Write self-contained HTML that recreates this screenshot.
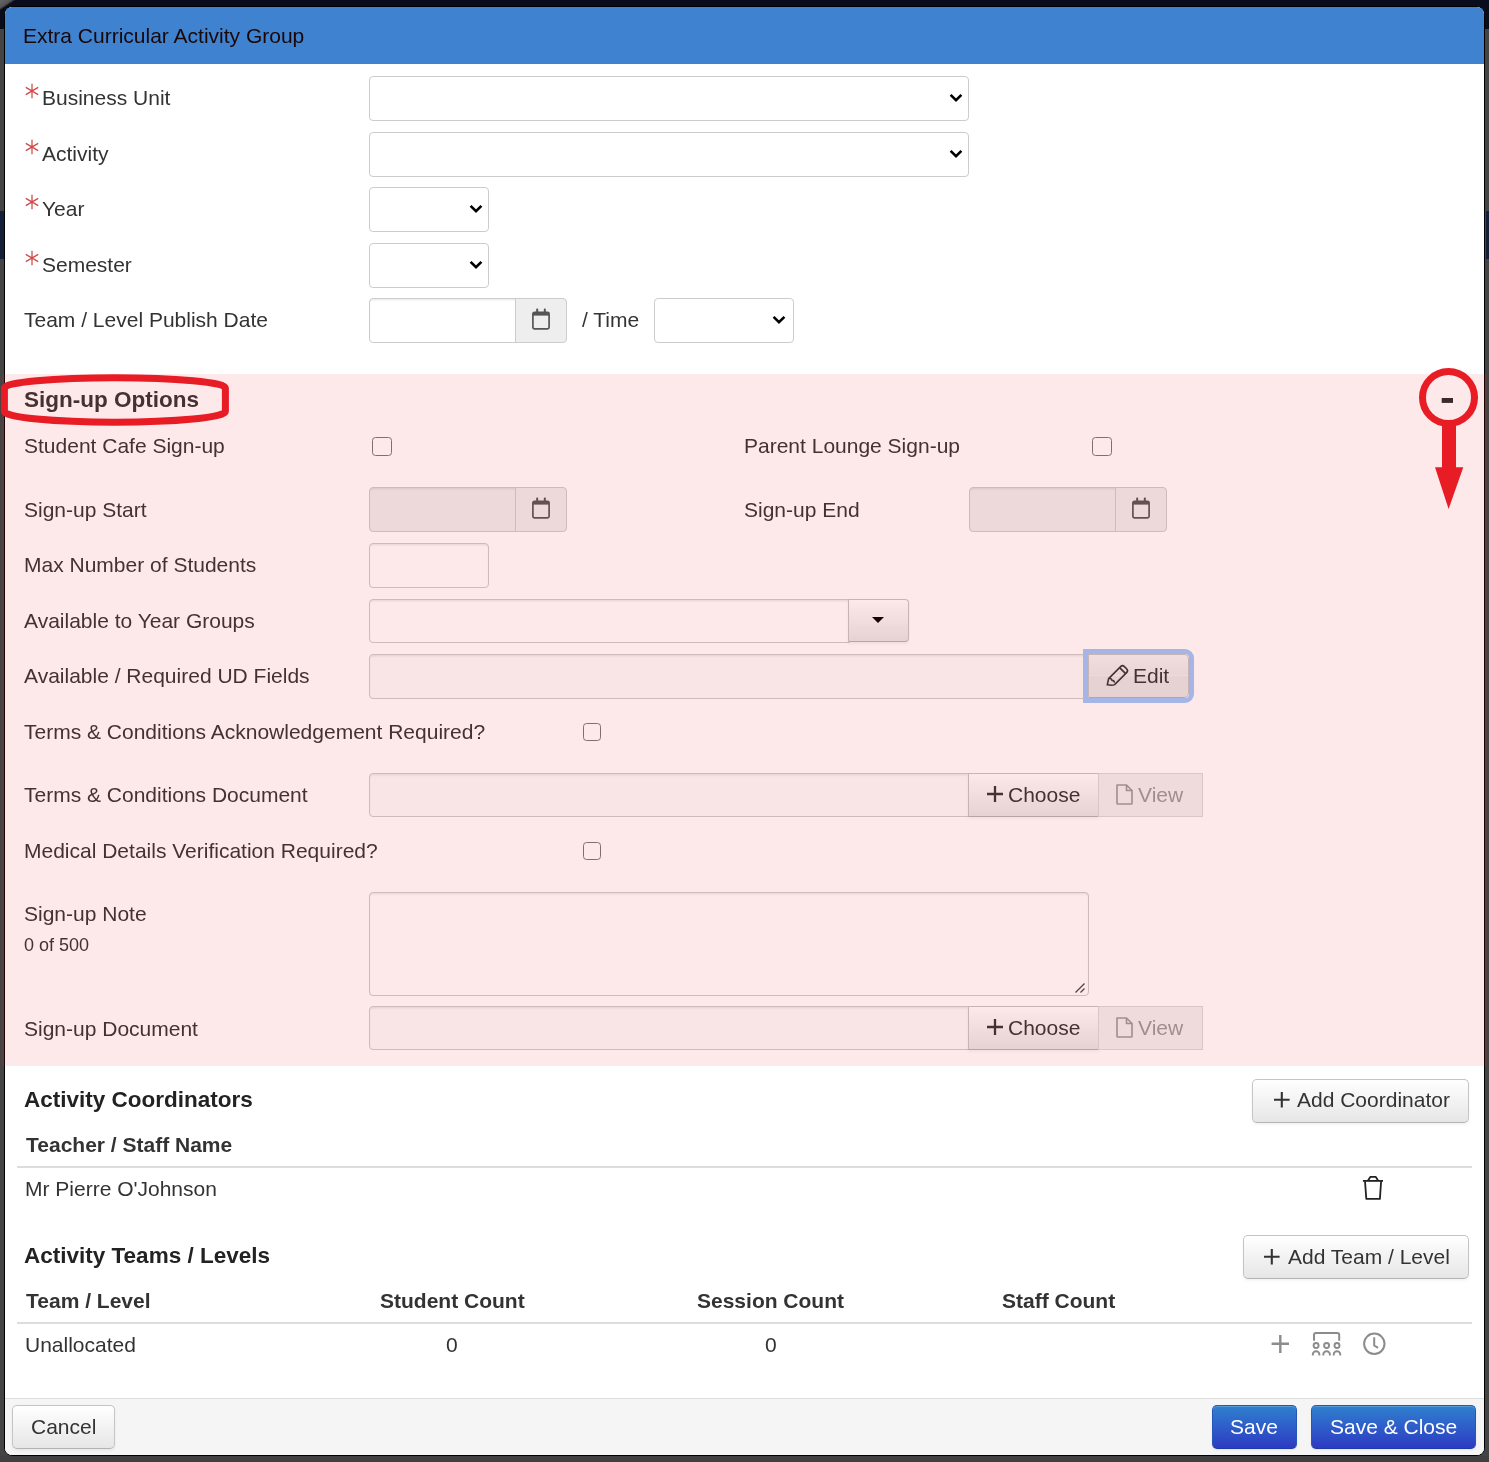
<!DOCTYPE html>
<html><head><meta charset="utf-8"><style>
html,body{margin:0;padding:0;}
body{width:1489px;height:1462px;position:relative;overflow:hidden;background:#444444;font-family:"Liberation Sans",sans-serif;}
.t{position:absolute;line-height:1;white-space:pre;will-change:transform;font-family:"Liberation Sans",sans-serif;}
.b{position:absolute;box-sizing:border-box;}
svg.b{overflow:visible;}
</style></head><body>
<div class="b" style="left:0px;top:0px;width:1489px;height:29px;background:#090c1d;"></div>
<div class="b" style="left:0px;top:1456px;width:1489px;height:6px;background:#404040;"></div>
<div class="b" style="left:0px;top:0px;width:16px;height:10px;background:linear-gradient(146deg,#666 0%,#555 38%,rgba(10,13,30,0) 52%);"></div>
<div class="b" style="left:1486px;top:211px;width:3px;height:48px;background:#14203a;"></div>
<div class="b" style="left:0px;top:211px;width:4px;height:48px;background:#14203a;"></div>
<div class="b" style="left:4px;top:6px;width:1481px;height:1450px;background:#fff;border:1px solid #000;border-radius:8px;overflow:hidden;"></div>
<div class="b" style="left:5px;top:7px;width:1479px;height:56.5px;background:#3f82d0;border-radius:7px 7px 0 0;"></div>
<div class="t" style="left:22.5px;top:25.00px;font-size:21px;font-weight:400;color:#1a0808;">Extra Curricular Activity Group</div>
<div class="b" style="left:5px;top:1398px;width:1479px;height:57px;background:#f5f5f5;border-top:1.5px solid #dddddd;border-radius:0 0 7px 7px;"></div>
<svg class="b" style="left:23.5px;top:83.4px" width="16" height="16" viewBox="-8 -8 16 16"><path d="M0 -7.25 V7.25 M-6.2 -3.6 L6.2 3.6 M-6.2 3.6 L6.2 -3.6" stroke="#d04848" stroke-width="1.25"/></svg>
<div class="t" style="left:42px;top:87.00px;font-size:21px;font-weight:400;color:#333;">Business Unit</div>
<div class="b" style="left:369px;top:76px;width:600px;height:45px;background:#fff;border:1.5px solid #cccccc;border-radius:4px;"></div>
<svg class="b" style="left:949px;top:93.0px" width="14" height="10" viewBox="0 0 14 10"><path d="M1.6 1.8 L7 7.2 L12.4 1.8" fill="none" stroke="#000" stroke-width="2.6"/></svg>
<svg class="b" style="left:23.5px;top:138.9px" width="16" height="16" viewBox="-8 -8 16 16"><path d="M0 -7.25 V7.25 M-6.2 -3.6 L6.2 3.6 M-6.2 3.6 L6.2 -3.6" stroke="#d04848" stroke-width="1.25"/></svg>
<div class="t" style="left:42px;top:143.00px;font-size:21px;font-weight:400;color:#333;">Activity</div>
<div class="b" style="left:369px;top:131.5px;width:600px;height:45.0px;background:#fff;border:1.5px solid #cccccc;border-radius:4px;"></div>
<svg class="b" style="left:949px;top:148.5px" width="14" height="10" viewBox="0 0 14 10"><path d="M1.6 1.8 L7 7.2 L12.4 1.8" fill="none" stroke="#000" stroke-width="2.6"/></svg>
<svg class="b" style="left:23.5px;top:194.4px" width="16" height="16" viewBox="-8 -8 16 16"><path d="M0 -7.25 V7.25 M-6.2 -3.6 L6.2 3.6 M-6.2 3.6 L6.2 -3.6" stroke="#d04848" stroke-width="1.25"/></svg>
<div class="t" style="left:42px;top:198.00px;font-size:21px;font-weight:400;color:#333;">Year</div>
<div class="b" style="left:369px;top:187px;width:120px;height:45px;background:#fff;border:1.5px solid #cccccc;border-radius:4px;"></div>
<svg class="b" style="left:469px;top:204.0px" width="14" height="10" viewBox="0 0 14 10"><path d="M1.6 1.8 L7 7.2 L12.4 1.8" fill="none" stroke="#000" stroke-width="2.6"/></svg>
<svg class="b" style="left:23.5px;top:249.89999999999998px" width="16" height="16" viewBox="-8 -8 16 16"><path d="M0 -7.25 V7.25 M-6.2 -3.6 L6.2 3.6 M-6.2 3.6 L6.2 -3.6" stroke="#d04848" stroke-width="1.25"/></svg>
<div class="t" style="left:42px;top:254.00px;font-size:21px;font-weight:400;color:#333;">Semester</div>
<div class="b" style="left:369px;top:242.5px;width:120px;height:45.0px;background:#fff;border:1.5px solid #cccccc;border-radius:4px;"></div>
<svg class="b" style="left:469px;top:259.5px" width="14" height="10" viewBox="0 0 14 10"><path d="M1.6 1.8 L7 7.2 L12.4 1.8" fill="none" stroke="#000" stroke-width="2.6"/></svg>
<div class="t" style="left:24px;top:309.00px;font-size:21px;font-weight:400;color:#333;">Team / Level Publish Date</div>
<div class="b" style="left:369px;top:298px;width:147.5px;height:45px;background:#fff;border:1.5px solid #cccccc;border-radius:4px 0 0 4px;box-shadow:inset 0 1.5px 1.5px rgba(0,0,0,.075);"></div>
<div class="b" style="left:515px;top:298px;width:52px;height:45px;background:#eeeeee;border:1.5px solid #cccccc;border-radius:0 4px 4px 0;"></div>
<svg class="b" style="left:532.0px;top:308.2px" width="18" height="22" viewBox="0 0 18 22"><rect x="0.9" y="4.4" width="16.2" height="16.4" rx="1.6" fill="none" stroke="#555" stroke-width="1.7"/><rect x="0.9" y="4.4" width="16.2" height="3.2" fill="#555"/><rect x="4.2" y="0.6" width="2" height="4.4" rx="0.8" fill="#555"/><rect x="11.8" y="0.6" width="2" height="4.4" rx="0.8" fill="#555"/></svg>
<div class="t" style="left:582px;top:309.00px;font-size:21px;font-weight:400;color:#333;">/ Time</div>
<div class="b" style="left:654px;top:298px;width:140px;height:45px;background:#fff;border:1.5px solid #cccccc;border-radius:4px;"></div>
<svg class="b" style="left:771.5px;top:315px" width="14" height="10" viewBox="0 0 14 10"><path d="M1.6 1.8 L7 7.2 L12.4 1.8" fill="none" stroke="#000" stroke-width="2.6"/></svg>
<div class="t" style="left:24px;top:389.00px;font-size:22.5px;font-weight:700;color:#333;">Sign-up Options</div>
<div class="t" style="left:24px;top:435.00px;font-size:21px;font-weight:400;color:#333;">Student Cafe Sign-up</div>
<div class="b" style="left:372.3px;top:437px;width:19.30000000000001px;height:19.30000000000001px;background:#fff;border:1.8px solid #767676;border-radius:3.5px;"></div>
<div class="t" style="left:744px;top:435.00px;font-size:21px;font-weight:400;color:#333;">Parent Lounge Sign-up</div>
<div class="b" style="left:1092.3px;top:437px;width:19.299999999999955px;height:19.30000000000001px;background:#fff;border:1.8px solid #767676;border-radius:3.5px;"></div>
<div class="t" style="left:24px;top:499.00px;font-size:21px;font-weight:400;color:#333;">Sign-up Start</div>
<div class="b" style="left:369px;top:487px;width:147.5px;height:44.5px;background:#eeeeee;border:1.5px solid #cccccc;border-radius:4px 0 0 4px;box-shadow:inset 0 1.5px 1.5px rgba(0,0,0,.075);"></div>
<div class="b" style="left:515px;top:487px;width:52px;height:44.5px;background:#eeeeee;border:1.5px solid #cccccc;border-radius:0 4px 4px 0;"></div>
<svg class="b" style="left:532.0px;top:496.95px" width="18" height="22" viewBox="0 0 18 22"><rect x="0.9" y="4.4" width="16.2" height="16.4" rx="1.6" fill="none" stroke="#555" stroke-width="1.7"/><rect x="0.9" y="4.4" width="16.2" height="3.2" fill="#555"/><rect x="4.2" y="0.6" width="2" height="4.4" rx="0.8" fill="#555"/><rect x="11.8" y="0.6" width="2" height="4.4" rx="0.8" fill="#555"/></svg>
<div class="t" style="left:744px;top:499.00px;font-size:21px;font-weight:400;color:#333;">Sign-up End</div>
<div class="b" style="left:969px;top:487px;width:147.5px;height:44.5px;background:#eeeeee;border:1.5px solid #cccccc;border-radius:4px 0 0 4px;box-shadow:inset 0 1.5px 1.5px rgba(0,0,0,.075);"></div>
<div class="b" style="left:1115px;top:487px;width:52px;height:44.5px;background:#eeeeee;border:1.5px solid #cccccc;border-radius:0 4px 4px 0;"></div>
<svg class="b" style="left:1132.0px;top:496.95px" width="18" height="22" viewBox="0 0 18 22"><rect x="0.9" y="4.4" width="16.2" height="16.4" rx="1.6" fill="none" stroke="#555" stroke-width="1.7"/><rect x="0.9" y="4.4" width="16.2" height="3.2" fill="#555"/><rect x="4.2" y="0.6" width="2" height="4.4" rx="0.8" fill="#555"/><rect x="11.8" y="0.6" width="2" height="4.4" rx="0.8" fill="#555"/></svg>
<div class="t" style="left:24px;top:554.00px;font-size:21px;font-weight:400;color:#333;">Max Number of Students</div>
<div class="b" style="left:369px;top:543px;width:120px;height:45px;background:#fff;border:1.5px solid #cccccc;border-radius:4px;box-shadow:inset 0 1.5px 1.5px rgba(0,0,0,.075);"></div>
<div class="t" style="left:24px;top:610.00px;font-size:21px;font-weight:400;color:#333;">Available to Year Groups</div>
<div class="b" style="left:369px;top:598.5px;width:480.5px;height:44.0px;background:#fff;border:1.5px solid #cccccc;border-radius:4px 0 0 4px;box-shadow:inset 0 1.5px 1.5px rgba(0,0,0,.075);"></div>
<div class="b" style="left:848px;top:598.5px;width:61px;height:43.5px;background:linear-gradient(#ffffff,#e6e6e6);border:1.5px solid #c5c5c5;border-bottom-color:#b3b3b3;box-shadow:inset 0 1px 0 rgba(255,255,255,.2),0 1.5px 3px rgba(0,0,0,.05);border-radius:0 4px 4px 0;"></div>
<svg class="b" style="left:872px;top:617px" width="12" height="6" viewBox="0 0 12 6"><path d="M0 0 H12 L6 6 Z" fill="#000"/></svg>
<div class="t" style="left:24px;top:665.00px;font-size:21px;font-weight:400;color:#333;">Available / Required UD Fields</div>
<div class="b" style="left:369px;top:654px;width:721px;height:44.5px;background:#fbfbfb;border:1.5px solid #cccccc;border-radius:4px 0 0 4px;box-shadow:inset 0 1.5px 1.5px rgba(0,0,0,.075);"></div>
<div class="b" style="left:1088px;top:654px;width:101px;height:44px;background:linear-gradient(#f3f3f3 0px,#e9e9e9 19.5px,#f0f0f0 20px,#f0f0f0 21px,#e6e6e6 21.5px);border:1.5px solid #c5c5c5;border-bottom-color:#b3b3b3;border-radius:0 5px 5px 0;"></div>
<svg class="b" style="left:1100px;top:658px" width="35" height="35" viewBox="0 0 35 35"><g fill="none" stroke="#333" stroke-width="1.6" stroke-linejoin="round"><path d="M7.3 26.8 L8.6 20.6 L20.6 8.6 Q22.5 6.7 24.4 8.6 L26.6 10.8 Q28.5 12.7 26.6 14.6 L14.6 26.6 Q12.5 27.8 7.3 26.8 Z"/><path d="M19.6 9.6 L25.6 15.6"/><path d="M8.6 20.6 Q10.6 19.6 11.2 21.2 Q11.6 22.2 12.6 22.4 Q14.2 22.8 14.6 24.6"/></g></svg>
<div class="t" style="left:1133px;top:665.00px;font-size:21px;font-weight:400;color:#333;">Edit</div>
<div class="t" style="left:24px;top:721.00px;font-size:21px;font-weight:400;color:#333;">Terms &amp; Conditions Acknowledgement Required?</div>
<div class="b" style="left:583px;top:723px;width:18px;height:18px;background:#fff;border:1.5px solid #767676;border-radius:3.5px;"></div>
<div class="t" style="left:24px;top:784.00px;font-size:21px;font-weight:400;color:#333;">Terms &amp; Conditions Document</div>
<div class="b" style="left:369px;top:773px;width:601px;height:44px;background:#fbfbfb;border:1.5px solid #cccccc;border-radius:4px 0 0 4px;box-shadow:inset 0 1.5px 1.5px rgba(0,0,0,.075);"></div>
<div class="b" style="left:968px;top:773px;width:130.5px;height:44px;background:linear-gradient(#ffffff,#e6e6e6);border:1.5px solid #c5c5c5;border-bottom-color:#b3b3b3;box-shadow:inset 0 1px 0 rgba(255,255,255,.2),0 1.5px 3px rgba(0,0,0,.05);border-radius:0;"></div>
<div class="b" style="left:1097.5px;top:773px;width:105.5px;height:44px;background:#f0f0f0;border:1.5px solid #d9d9d9;border-radius:0;"></div>
<svg class="b" style="left:986.5px;top:786.0px" width="16" height="16" viewBox="0 0 16 16"><path d="M8.0 0 V16 M0 8.0 H16" stroke="#333" stroke-width="2.3"/></svg>
<div class="t" style="left:1008px;top:784.00px;font-size:21px;font-weight:400;color:#333;">Choose</div>
<svg class="b" style="left:1116px;top:783.5px" width="17" height="21" viewBox="0 0 17 21"><path d="M1 1 H10.5 L16 6.5 V19.2 Q16 20 15.2 20 H1.8 Q1 20 1 19.2 Z M10.5 1 V6.5 H16" fill="none" stroke="#999" stroke-width="1.6" stroke-linejoin="round"/></svg>
<div class="t" style="left:1138px;top:784.00px;font-size:21px;font-weight:400;color:#999;">View</div>
<div class="t" style="left:24px;top:840.00px;font-size:21px;font-weight:400;color:#333;">Medical Details Verification Required?</div>
<div class="b" style="left:583px;top:842px;width:18px;height:18px;background:#fff;border:1.5px solid #767676;border-radius:3.5px;"></div>
<div class="t" style="left:24px;top:903.00px;font-size:21px;font-weight:400;color:#333;">Sign-up Note</div>
<div class="t" style="left:24px;top:936.00px;font-size:18px;font-weight:400;color:#333;">0 of 500</div>
<div class="b" style="left:369px;top:892px;width:720px;height:104px;background:#fff;border:1.5px solid #cccccc;border-radius:4px;box-shadow:inset 0 1.5px 1.5px rgba(0,0,0,.075);"></div>
<svg class="b" style="left:1074px;top:982px" width="12" height="12" viewBox="0 0 12 12"><path d="M1.5 10.5 L10.5 1.5 M6.5 10.5 L10.5 6.5" stroke="#444" stroke-width="1.3"/></svg>
<div class="t" style="left:24px;top:1018.00px;font-size:21px;font-weight:400;color:#333;">Sign-up Document</div>
<div class="b" style="left:369px;top:1006px;width:601px;height:43.5px;background:#fbfbfb;border:1.5px solid #cccccc;border-radius:4px 0 0 4px;box-shadow:inset 0 1.5px 1.5px rgba(0,0,0,.075);"></div>
<div class="b" style="left:968px;top:1006px;width:130.5px;height:43.5px;background:linear-gradient(#ffffff,#e6e6e6);border:1.5px solid #c5c5c5;border-bottom-color:#b3b3b3;box-shadow:inset 0 1px 0 rgba(255,255,255,.2),0 1.5px 3px rgba(0,0,0,.05);border-radius:0;"></div>
<div class="b" style="left:1097.5px;top:1006px;width:105.5px;height:43.5px;background:#f0f0f0;border:1.5px solid #d9d9d9;border-radius:0;"></div>
<svg class="b" style="left:986.5px;top:1019.0px" width="16" height="16" viewBox="0 0 16 16"><path d="M8.0 0 V16 M0 8.0 H16" stroke="#333" stroke-width="2.3"/></svg>
<div class="t" style="left:1008px;top:1017.00px;font-size:21px;font-weight:400;color:#333;">Choose</div>
<svg class="b" style="left:1116px;top:1016.5px" width="17" height="21" viewBox="0 0 17 21"><path d="M1 1 H10.5 L16 6.5 V19.2 Q16 20 15.2 20 H1.8 Q1 20 1 19.2 Z M10.5 1 V6.5 H16" fill="none" stroke="#999" stroke-width="1.6" stroke-linejoin="round"/></svg>
<div class="t" style="left:1138px;top:1017.00px;font-size:21px;font-weight:400;color:#999;">View</div>
<div class="b" style="left:2.2px;top:374px;width:1484.8px;height:692px;background:rgba(235,25,45,0.1);"></div>
<div class="b" style="left:1083px;top:649px;width:111px;height:54px;border:5px solid #a5b5e6;border-left-width:5px;border-radius:0 9px 9px 0;"></div>
<svg class="b" style="left:0px;top:360px" width="240" height="80" viewBox="0 360 240 80"><path d="M4.4 388 A110.5 10.3 0 0 1 225.4 388 L225.4 411.5 A110.5 10.7 0 0 1 4.4 411.5 Z" fill="none" stroke="#e81c24" stroke-width="7" stroke-linejoin="round"/></svg>
<svg class="b" style="left:1400px;top:360px" width="89" height="160" viewBox="1400 360 89 160"><circle cx="1448.5" cy="397.5" r="26" fill="none" stroke="#e81c24" stroke-width="7"/><rect x="1442" y="425" width="14" height="43" fill="#e81c24"/><path d="M1435 467.2 H1463.3 L1448.6 509 Z" fill="#e81c24"/><rect x="1441.7" y="398" width="11.3" height="4.9" fill="#3a2a2a"/></svg>
<div class="t" style="left:24px;top:1089.00px;font-size:22.5px;font-weight:700;color:#222;">Activity Coordinators</div>
<div class="b" style="left:1252px;top:1079px;width:217px;height:43.5px;background:linear-gradient(#ffffff,#e6e6e6);border:1.5px solid #c5c5c5;border-bottom-color:#b3b3b3;box-shadow:inset 0 1px 0 rgba(255,255,255,.2),0 1.5px 3px rgba(0,0,0,.05);border-radius:5px;"></div>
<svg class="b" style="left:1273.5px;top:1092px" width="15.6" height="15.6" viewBox="0 0 15.6 15.6"><path d="M7.8 0 V15.6 M0 7.8 H15.6" stroke="#333" stroke-width="2.1"/></svg>
<div class="t" style="left:1297px;top:1089.00px;font-size:21px;font-weight:400;color:#333;">Add Coordinator</div>
<div class="t" style="left:26px;top:1134.00px;font-size:21px;font-weight:700;color:#333;">Teacher / Staff Name</div>
<div class="b" style="left:17px;top:1166px;width:1455px;height:1.5px;background:#dddddd;"></div>
<div class="t" style="left:25px;top:1178.00px;font-size:21px;font-weight:400;color:#333;">Mr Pierre O'Johnson</div>
<svg class="b" style="left:1355px;top:1170px" width="35" height="35" viewBox="1355 1170 35 35"><g fill="none" stroke="#222" stroke-width="1.8" stroke-linejoin="round"><path d="M1362.9 1180.9 H1383"/><path d="M1368 1180.5 L1370.3 1176.9 H1375.8 L1378 1180.5"/><path d="M1365 1181.3 L1366.3 1198.9 H1379.9 L1381.1 1181.3"/></g></svg>
<div class="t" style="left:24px;top:1245.00px;font-size:22.5px;font-weight:700;color:#222;">Activity Teams / Levels</div>
<div class="b" style="left:1243px;top:1235px;width:226px;height:43.5px;background:linear-gradient(#ffffff,#e6e6e6);border:1.5px solid #c5c5c5;border-bottom-color:#b3b3b3;box-shadow:inset 0 1px 0 rgba(255,255,255,.2),0 1.5px 3px rgba(0,0,0,.05);border-radius:5px;"></div>
<svg class="b" style="left:1264px;top:1248.5px" width="15.6" height="15.6" viewBox="0 0 15.6 15.6"><path d="M7.8 0 V15.6 M0 7.8 H15.6" stroke="#333" stroke-width="2.1"/></svg>
<div class="t" style="left:1287.5px;top:1246.00px;font-size:21px;font-weight:400;color:#333;">Add Team / Level</div>
<div class="t" style="left:26px;top:1290.00px;font-size:21px;font-weight:700;color:#333;">Team / Level</div>
<div class="t" style="left:380px;top:1290.00px;font-size:21px;font-weight:700;color:#333;">Student Count</div>
<div class="t" style="left:697px;top:1290.00px;font-size:21px;font-weight:700;color:#333;">Session Count</div>
<div class="t" style="left:1001.5px;top:1290.00px;font-size:21px;font-weight:700;color:#333;">Staff Count</div>
<div class="b" style="left:17px;top:1322px;width:1455px;height:1.5px;background:#dddddd;"></div>
<div class="t" style="left:25px;top:1334.00px;font-size:21px;font-weight:400;color:#333;">Unallocated</div>
<div class="t" style="left:446px;top:1334.00px;font-size:21px;font-weight:400;color:#333;">0</div>
<div class="t" style="left:764.5px;top:1334.00px;font-size:21px;font-weight:400;color:#333;">0</div>
<svg class="b" style="left:1265px;top:1325px" width="130" height="40" viewBox="1265 1325 130 40"><g fill="none" stroke="#8c8c8c" stroke-width="2"><path d="M1280.3 1335 V1353 M1271.6 1343.8 H1289" stroke-width="2.4"/><path d="M1314 1340.8 V1335 Q1314 1333 1316 1333 H1337.2 Q1339.2 1333 1339.2 1335 V1340.8"/><circle cx="1316.1" cy="1345.5" r="2.5" stroke-width="1.9"/><circle cx="1326.6" cy="1345.5" r="2.5" stroke-width="1.9"/><circle cx="1337" cy="1345.5" r="2.5" stroke-width="1.9"/><path d="M1312.8 1355.6 V1354.6 A3.3 3.3 0 0 1 1319.4 1354.6 V1355.6 M1323.3 1355.6 V1354.6 A3.3 3.3 0 0 1 1329.9 1354.6 V1355.6 M1333.7 1355.6 V1354.6 A3.3 3.3 0 0 1 1340.3 1354.6 V1355.6" stroke-width="1.9"/><circle cx="1374.3" cy="1343.8" r="10.2"/><path d="M1374.2 1337.2 V1345.5 L1378.1 1347.9"/></g></svg>
<div class="b" style="left:12px;top:1405px;width:103px;height:44px;background:linear-gradient(#ffffff,#e6e6e6);border:1.5px solid #c5c5c5;border-bottom-color:#b3b3b3;box-shadow:inset 0 1px 0 rgba(255,255,255,.2),0 1.5px 3px rgba(0,0,0,.05);border-radius:5px;"></div>
<div class="t" style="left:31px;top:1416.00px;font-size:21px;font-weight:400;color:#333;">Cancel</div>
<div class="b" style="left:1212px;top:1405px;width:85px;height:44px;background:linear-gradient(#2f80cf,#2d3bc3);border:1px solid #2557b8;border-bottom-color:#1e3aa6;border-radius:5px;box-shadow:inset 0 1px 0 rgba(255,255,255,.2),0 1px 2px rgba(0,0,0,.08);"></div>
<div class="t" style="left:1230px;top:1416.00px;font-size:21px;font-weight:400;color:#fff;">Save</div>
<div class="b" style="left:1311px;top:1405px;width:165px;height:44px;background:linear-gradient(#2f80cf,#2d3bc3);border:1px solid #2557b8;border-bottom-color:#1e3aa6;border-radius:5px;box-shadow:inset 0 1px 0 rgba(255,255,255,.2),0 1px 2px rgba(0,0,0,.08);"></div>
<div class="t" style="left:1330px;top:1416.00px;font-size:21px;font-weight:400;color:#fff;">Save &amp; Close</div>
</body></html>
